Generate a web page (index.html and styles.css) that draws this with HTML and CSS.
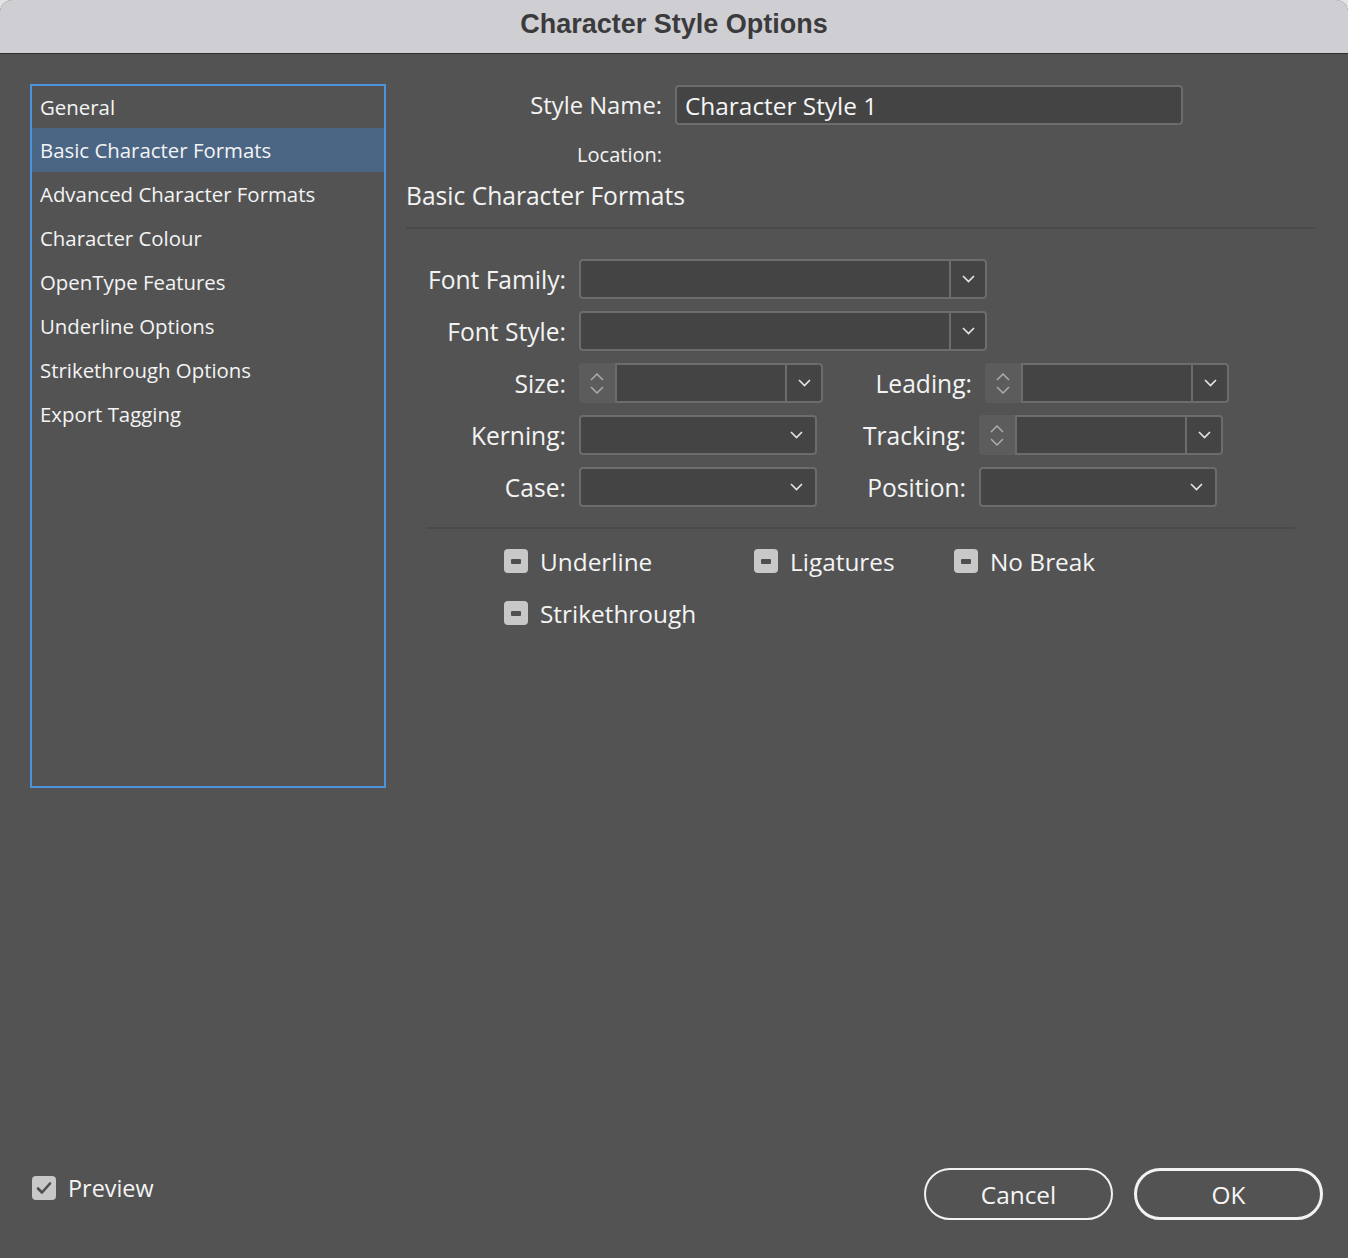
FILE: index.html
```html
<!DOCTYPE html>
<html>
<head>
<meta charset="utf-8">
<title>Character Style Options</title>
<link rel="stylesheet" href="styles.css">
</head>
<body>
<div class="window">
  <div class="titlebar">Character Style Options</div>
  <div class="content">
    <div class="main">
      <ul class="nav">
        <li class="nav-item first">General</li>
        <li class="nav-item selected">Basic Character Formats</li>
        <li class="nav-item">Advanced Character Formats</li>
        <li class="nav-item">Character Colour</li>
        <li class="nav-item">OpenType Features</li>
        <li class="nav-item">Underline Options</li>
        <li class="nav-item">Strikethrough Options</li>
        <li class="nav-item">Export Tagging</li>
      </ul>
      <div class="panel">
        <div class="name-row">
          <span class="top-label">Style Name:</span>
          <div class="text-input">Character Style 1</div>
        </div>
        <div class="loc-row"><span class="top-label small">Location:</span></div>
        <div class="section-title">Basic Character Formats</div>
        <div class="divider"></div>

        <div class="form">
          <div class="form-row">
            <span class="flabel">Font Family:</span>
            <div class="select wide">
              <div class="sel-val"></div>
              <div class="sel-btn sep"><svg width="13" height="8" viewBox="0 0 13 8"><polyline points="1,1 6.5,6.5 12,1" fill="none" stroke="#e6e6e6" stroke-width="1.6"/></svg></div>
            </div>
          </div>
          <div class="form-row">
            <span class="flabel">Font Style:</span>
            <div class="select wide">
              <div class="sel-val"></div>
              <div class="sel-btn sep"><svg width="13" height="8" viewBox="0 0 13 8"><polyline points="1,1 6.5,6.5 12,1" fill="none" stroke="#e6e6e6" stroke-width="1.6"/></svg></div>
            </div>
          </div>
          <div class="form-row">
            <span class="flabel">Size:</span>
            <div class="combo">
              <div class="spin">
                <svg width="14" height="8" viewBox="0 0 14 8"><polyline points="1,7 7,1 13,7" fill="none" stroke="#ababab" stroke-width="1.5"/></svg>
                <svg width="14" height="8" viewBox="0 0 14 8"><polyline points="1,1 7,7 13,1" fill="none" stroke="#ababab" stroke-width="1.5"/></svg>
              </div>
              <div class="combo-field">
                <div class="sel-val"></div>
                <div class="sel-btn sep"><svg width="13" height="8" viewBox="0 0 13 8"><polyline points="1,1 6.5,6.5 12,1" fill="none" stroke="#e6e6e6" stroke-width="1.6"/></svg></div>
              </div>
            </div>
            <span class="flabel second">Leading:</span>
            <div class="combo">
              <div class="spin">
                <svg width="14" height="8" viewBox="0 0 14 8"><polyline points="1,7 7,1 13,7" fill="none" stroke="#ababab" stroke-width="1.5"/></svg>
                <svg width="14" height="8" viewBox="0 0 14 8"><polyline points="1,1 7,7 13,1" fill="none" stroke="#ababab" stroke-width="1.5"/></svg>
              </div>
              <div class="combo-field">
                <div class="sel-val"></div>
                <div class="sel-btn sep"><svg width="13" height="8" viewBox="0 0 13 8"><polyline points="1,1 6.5,6.5 12,1" fill="none" stroke="#e6e6e6" stroke-width="1.6"/></svg></div>
              </div>
            </div>
          </div>
          <div class="form-row">
            <span class="flabel">Kerning:</span>
            <div class="select narrow">
              <div class="sel-val"></div>
              <div class="sel-btn"><svg width="13" height="8" viewBox="0 0 13 8"><polyline points="1,1 6.5,6.5 12,1" fill="none" stroke="#e6e6e6" stroke-width="1.6"/></svg></div>
            </div>
            <span class="flabel second">Tracking:</span>
            <div class="combo">
              <div class="spin">
                <svg width="14" height="8" viewBox="0 0 14 8"><polyline points="1,7 7,1 13,7" fill="none" stroke="#ababab" stroke-width="1.5"/></svg>
                <svg width="14" height="8" viewBox="0 0 14 8"><polyline points="1,1 7,7 13,1" fill="none" stroke="#ababab" stroke-width="1.5"/></svg>
              </div>
              <div class="combo-field">
                <div class="sel-val"></div>
                <div class="sel-btn sep"><svg width="13" height="8" viewBox="0 0 13 8"><polyline points="1,1 6.5,6.5 12,1" fill="none" stroke="#e6e6e6" stroke-width="1.6"/></svg></div>
              </div>
            </div>
          </div>
          <div class="form-row">
            <span class="flabel">Case:</span>
            <div class="select narrow">
              <div class="sel-val"></div>
              <div class="sel-btn"><svg width="13" height="8" viewBox="0 0 13 8"><polyline points="1,1 6.5,6.5 12,1" fill="none" stroke="#e6e6e6" stroke-width="1.6"/></svg></div>
            </div>
            <span class="flabel second">Position:</span>
            <div class="select narrow">
              <div class="sel-val"></div>
              <div class="sel-btn"><svg width="13" height="8" viewBox="0 0 13 8"><polyline points="1,1 6.5,6.5 12,1" fill="none" stroke="#e6e6e6" stroke-width="1.6"/></svg></div>
            </div>
          </div>
        </div>

        <div class="divider inner"></div>

        <div class="checks">
          <div class="check-row">
            <div class="check col1"><span class="box mixed"><span class="dash"></span></span><span class="clabel">Underline</span></div>
            <div class="check col2"><span class="box mixed"><span class="dash"></span></span><span class="clabel">Ligatures</span></div>
            <div class="check"><span class="box mixed"><span class="dash"></span></span><span class="clabel">No Break</span></div>
          </div>
          <div class="check-row">
            <div class="check col1"><span class="box mixed"><span class="dash"></span></span><span class="clabel">Strikethrough</span></div>
          </div>
        </div>
      </div>
    </div>

    <div class="footer">
      <div class="check preview">
        <span class="box"><svg width="16" height="14" viewBox="0 0 16 14"><polyline points="2,7.5 6,11.5 14,2.5" fill="none" stroke="#4e4e4e" stroke-width="2.6" stroke-linecap="round" stroke-linejoin="round"/></svg></span>
        <span class="clabel pv">Preview</span>
      </div>
      <div class="buttons">
        <div class="btn">Cancel</div>
        <div class="btn primary">OK</div>
      </div>
    </div>
  </div>
</div>
</body>
</html>
```

FILE: styles.css
```css
* { box-sizing: border-box; }

html, body {
  margin: 0;
  padding: 0;
  background: #e4e4e6;
}

body {
  font-family: "Open Sans", Lato, sans-serif;
  color: #f3f3f3;
}

.window {
  width: 1348px;
  height: 1258px;
  display: flex;
  flex-direction: column;
  background: #535353;
  border-radius: 12px 12px 0 0;
  overflow: hidden;
}

.titlebar {
  height: 54px;
  flex: none;
  background: #cfcfd3;
  border-bottom: 1px solid #2c2c2c;
  display: flex;
  align-items: center;
  justify-content: center;
  font-family: "Liberation Sans", Arial, sans-serif;
  font-weight: bold;
  font-size: 27px;
  color: #3b3b3d;
  padding-bottom: 4px;
}

.content {
  flex: 1;
  display: flex;
  flex-direction: column;
}

.main {
  flex: 1;
  display: flex;
  align-items: flex-start;
}

/* sidebar list */
.nav {
  list-style: none;
  margin: 30px 0 0 30px;
  padding: 0;
  width: 356px;
  height: 704px;
  border: 2px solid #4b93dd;
  flex: none;
}

.nav-item {
  height: 44px;
  display: flex;
  align-items: center;
  padding-left: 8px;
  font-size: 20.4px;
  color: #f4f4f4;
}

.nav-item.first { height: 42px; }

.nav-item.selected { background: #4b6584; }

/* right panel */
.panel {
  margin-left: 20px;
  width: 909px;
  display: flex;
  flex-direction: column;
}

.name-row {
  margin-top: 31px;
  display: flex;
  align-items: center;
  gap: 13px;
}

.top-label {
  width: 256px;
  text-align: right;
  font-size: 23.8px;
}

.top-label.small { font-size: 20px; }

.text-input {
  width: 508px;
  height: 40px;
  background: #444444;
  border: 2px solid #6c6c6c;
  border-radius: 4px;
  display: flex;
  align-items: center;
  padding-left: 8px;
  font-size: 24.4px;
  color: #f6f6f6;
}

.loc-row {
  margin-top: 17px;
  height: 24px;
  display: flex;
  align-items: center;
}

.section-title {
  margin-top: 15px;
  height: 30px;
  line-height: 30px;
  font-size: 24.6px;
}

.divider {
  margin-top: 16px;
  height: 2px;
  background: #4a4a4a;
}

.divider.inner {
  margin: 20px 0 0 20px;
  width: 869px;
}

/* form */
.form {
  margin-top: 30px;
  padding-left: 20px;
  display: flex;
  flex-direction: column;
  gap: 12px;
}

.form-row {
  height: 40px;
  display: flex;
  align-items: center;
}

.flabel {
  width: 140px;
  margin-right: 13px;
  text-align: right;
  font-size: 24.6px;
  flex: none;
  white-space: nowrap;
}

.flabel.second { width: 149px; }

.select {
  height: 40px;
  display: flex;
  background: #444444;
  border: 2px solid #6c6c6c;
  border-radius: 4px;
  flex: none;
}

.select.wide { width: 408px; }
.select.narrow { width: 238px; }

.sel-val { flex: 1; }

.sel-btn {
  width: 36px;
  display: flex;
  align-items: center;
  justify-content: center;
  flex: none;
}

.select.narrow .sel-btn { width: 38px; }

.sel-btn.sep { border-left: 2px solid #6c6c6c; }

.combo {
  width: 244px;
  height: 40px;
  display: flex;
  flex: none;
}

.spin {
  width: 36px;
  background: #5c5c5c;
  border-radius: 4px 0 0 4px;
  display: flex;
  flex-direction: column;
  align-items: center;
  justify-content: center;
  gap: 5px;
  flex: none;
}

.combo-field {
  flex: 1;
  display: flex;
  background: #444444;
  border: 2px solid #6c6c6c;
  border-radius: 0 4px 4px 0;
}

/* checkboxes */
.checks {
  margin-top: 20px;
  padding-left: 98px;
  display: flex;
  flex-direction: column;
  gap: 28px;
}

.check-row {
  display: flex;
  height: 24px;
}

.check {
  display: flex;
  align-items: center;
  gap: 12px;
}

.check.col1 { width: 250px; }
.check.col2 { width: 200px; }

.box {
  width: 24px;
  height: 24px;
  border-radius: 4px;
  background: #c8c8c8;
  display: flex;
  align-items: center;
  justify-content: center;
  flex: none;
}

.dash {
  width: 10px;
  height: 5px;
  background: #4f4f4f;
  border-radius: 1px;
}

.clabel {
  font-size: 24.4px;
  color: #f4f4f4;
  white-space: nowrap;
}

.clabel.pv { font-size: 23.4px; }

/* footer */
.footer {
  height: 52px;
  margin-bottom: 38px;
  padding: 0 25px 0 32px;
  display: flex;
  align-items: center;
  justify-content: space-between;
}

.preview { padding-bottom: 13px; }

.buttons {
  display: flex;
  gap: 21px;
}

.btn {
  width: 189px;
  height: 52px;
  border: 2px solid #f2f2f2;
  border-radius: 26px;
  display: flex;
  align-items: center;
  justify-content: center;
  font-size: 24.4px;
  color: #f6f6f6;
}

.btn.primary { border-width: 3px; }
```
